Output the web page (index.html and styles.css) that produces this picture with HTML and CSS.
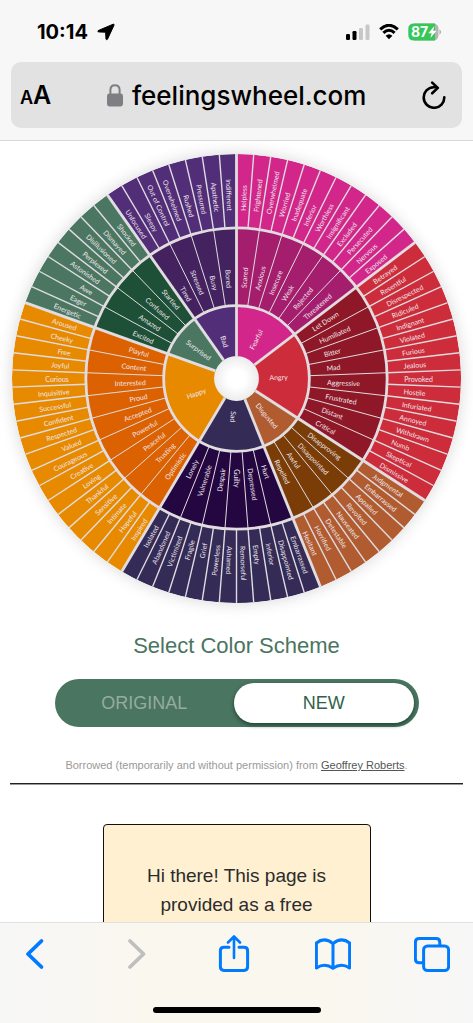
FILE: index.html
```html
<!DOCTYPE html>
<html lang="en">
<head>
    <meta charset="UTF-8">
    <meta name="viewport" content="width=device-width, initial-scale=1.0">
    <title>Feelings Wheel</title>
    <link rel="stylesheet" href="styles.css">
</head>
<body>
    <header class="browser-top">
        <div class="status">
            <span class="time">10:14</span>
            <svg class="location" width="18" height="18" viewBox="0 0 18 18"><path d="M16.2 1.2 L1.2 7.6 Q0.2 8.6 1.6 8.9 L8.6 9.2 L9 16 Q9.5 17.5 10.5 16.2 L17 2.2 Q17.3 0.8 16.2 1.2 Z"/></svg>
            <svg class="signal" width="24" height="16" viewBox="0 0 24 16">
                <rect x="0" y="10" width="4" height="6" rx="1.2"/>
                <rect x="6.5" y="7" width="4" height="9" rx="1.2"/>
                <rect class="off" x="13" y="4" width="4" height="12" rx="1.2"/>
                <rect class="off" x="19.5" y="0.5" width="4" height="15.5" rx="1.2"/>
            </svg>
            <svg class="wifi" width="20" height="16" viewBox="0 0 20 16">
                <path class="arc" d="M1.2 5.4 Q10 -2.8 18.8 5.4"/>
                <path class="arc" d="M4.4 8.9 Q10 3.7 15.6 8.9"/>
                <path d="M6.6 11.7 Q10 8.7 13.4 11.7 L10 15.2 Z"/>
            </svg>
            <svg class="battery" width="34" height="18" viewBox="0 0 34 18">
                <path class="off" d="M6 0.5 H25 Q30.5 0.5 30.5 6 V12 Q30.5 17.5 25 17.5 H6 Z"/>
                <path class="off" d="M31.4 6.3 Q33.2 7.3 33.2 9 Q33.2 10.7 31.4 11.7 Z"/>
                <path class="charge" d="M6 0.5 H27 V17.5 H6 Q0.3 17.5 0.3 12 V6 Q0.3 0.5 6 0.5 Z"/>
                <text x="3" y="14">87</text>
                <path class="bolt" d="M26.4 3 L20.3 10.2 H23.6 L22.4 15 L28.6 7.8 H25.2 Z"/>
            </svg>
        </div>
        <div class="address">
            <button class="text-size" aria-label="Text size"><small>A</small>A</button>
            <div class="url">
                <svg width="16" height="23" viewBox="0 0 16 23"><path class="shackle" d="M3.4 11 V6 Q3.4 1.2 8 1.2 Q12.6 1.2 12.6 6 V11"/><rect x="0" y="9.5" width="16" height="13" rx="2.4"/></svg>
                <span>feelingswheel.com</span>
            </div>
            <button class="reload" aria-label="Reload">
                <svg width="24" height="28" viewBox="0 0 24 28"><path d="M13.2 6.2 H11.6 A10.3 10.3 0 1 0 22.3 16.2"/><path d="M10.2 1.6 L15.8 6.9 L10.2 12.3"/></svg>
            </button>
        </div>
    </header>

    <main>
        <svg id="wheel" class="wheel" viewBox="-225 -225 450 450"></svg>

        <h1>Select Color Scheme</h1>
        <div class="switch">
            <input type="radio" name="scheme" id="original">
            <label for="original">ORIGINAL</label>
            <input type="radio" name="scheme" id="new" checked>
            <label for="new">NEW</label>
        </div>
        <p class="credit">Borrowed (temporarily and without permission) from <a href="#">Geoffrey Roberts</a>.</p>
        <hr>
        <div class="note">Hi there! This page is provided as a free</div>
    </main>

    <footer class="browser-bottom">
        <nav>
            <button aria-label="Back"><svg width="36" height="38" viewBox="0 0 36 38"><path class="chevron" d="M24.5 6 L11 19 L24.5 32"/></svg></button>
            <button class="disabled" aria-label="Forward" disabled><svg width="36" height="38" viewBox="0 0 36 38"><path class="chevron" d="M14 6 L27.5 19 L14 32"/></svg></button>
            <button aria-label="Share"><svg width="36" height="38" viewBox="0 0 36 38"><path d="M13 12.2 H8 Q4.4 12.2 4.4 15.8 V31.8 Q4.4 35.4 8 35.4 H28 Q31.6 35.4 31.6 31.8 V15.8 Q31.6 12.2 28 12.2 H23"/><path class="thin" d="M18 23 V2 M12 7.5 L18 1.5 L24 7.5"/></svg></button>
            <button aria-label="Bookmarks"><svg width="36" height="38" viewBox="0 0 36 38"><path d="M18 8.6 Q9.5 1.5 1.4 8 V33 Q10 27.5 18 33.4 Q26 27.5 34.6 33 V8 Q26.5 1.5 18 8.6 V33"/></svg></button>
            <button aria-label="Tabs"><svg width="36" height="38" viewBox="0 0 36 38"><rect x="9.6" y="11" width="25" height="24.6" rx="4"/><path d="M9 27.8 H5.2 Q1.4 27.8 1.4 24 V7.4 Q1.4 3.6 5.2 3.6 H22 Q25.8 3.6 25.8 7.4 V10.6"/></svg></button>
        </nav>
        <div class="home"></div>
    </footer>

    <script src="wheel.js"></script>
</body>
</html>
```

FILE: styles.css
```css
body {
    margin: 0;
    height: 100vh;
    display: flex;
    flex-direction: column;
    overflow: hidden;
    background-color: #fff;
    font-family: "Liberation Sans", Arial, sans-serif;
}
button {
    border: none;
    padding: 0;
    background: none;
    color: inherit;
    font: inherit;
    cursor: pointer;
}
svg {
    display: block;
    flex: none;
}

/* Top bar */
.browser-top {
    padding: 20px 11px 12px;
    background-color: #f7f7f7;
    border-bottom: 1px solid #d8d8d8;
    font-family: Inter, sans-serif;
}
.status {
    display: flex;
    align-items: center;
    height: 24px;
    padding: 0 20px 0 26px;
    margin-bottom: 18px;
}
.time {
    font-size: 20px;
    font-weight: 700;
}
.location {
    margin-left: 9px;
    stroke: #000;
}
.signal {
    margin-left: auto;
}
.wifi {
    margin: 0 9px;
}
.wifi .arc {
    fill: none;
    stroke: #000;
    stroke-width: 3;
}
.signal .off {
    fill: #c8c8c8;
}
.battery .off {
    fill: #b4b4b4;
}
.battery .charge {
    fill: #34c759;
}
.battery text {
    font-size: 14px;
    font-weight: 700;
    fill: #fff;
}
.battery .bolt {
    fill: #fff;
}
.address {
    display: flex;
    align-items: center;
    justify-content: space-between;
    height: 66px;
    padding: 0 16px 0 9px;
    border-radius: 10px;
    background-color: #e2e2e2;
}
.text-size {
    font-size: 25px;
    font-weight: 600;
}
.text-size small {
    font-size: 18px;
}
.url {
    display: flex;
    align-items: center;
    gap: 9px;
    font-size: 26px;
    font-weight: 500;
}
.url svg {
    fill: #7f7f83;
}
.url .shackle {
    fill: none;
    stroke: #7f7f83;
    stroke-width: 2;
}
.reload svg {
    fill: none;
    stroke: #000;
    stroke-width: 2.6;
    stroke-linecap: round;
    stroke-linejoin: round;
}

/* Page */
main {
    flex: 1;
    min-height: 0;
    overflow: hidden;
    padding: 13px 10px 0;
    text-align: center;
}
.wheel {
    width: calc(100% - 4px);
    margin: 0 auto;
    border-radius: 50%;
    box-shadow: 0 0 16px rgba(0, 0, 0, 0.16);
}
.wheel text {
    font-family: Lato, sans-serif;
    font-size: 7px;
    fill: #efe6ea;
    dominant-baseline: central;
}
.wheel .line {
    fill: none;
    stroke: #e0dcdf;
    stroke-width: 1.4;
}
.wheel .line.fine {
    stroke-width: 1;
}
.wheel .line.thick {
    stroke-width: 2.8;
}
h1 {
    margin: 30px 0 20px;
    font-size: 22px;
    line-height: 26px;
    font-weight: normal;
    color: #4a7560;
}
.switch {
    box-sizing: border-box;
    display: flex;
    width: 364px;
    max-width: 100%;
    height: 48px;
    margin: 0 auto;
    padding: 4px 5px 4px 0;
    border-radius: 24px;
    background-color: #4a7560;
}
.switch input {
    appearance: none;
    width: 0;
    margin: 0;
}
.switch label {
    flex: 1;
    border-radius: 20px;
    font-size: 18px;
    line-height: 40px;
    color: #95ac9f;
    cursor: pointer;
}
.switch input:checked + label {
    background-color: #fff;
    color: #335f4a;
    box-shadow: 0 2px 4px #1d4431;
}
.credit {
    margin: 31px 0 11px;
    font-size: 11px;
    line-height: 14px;
    color: #999;
}
.credit a {
    color: #555;
}
hr {
    margin: 0;
    border: none;
    border-top: 1px solid #222;
    border-bottom: 1px solid #999;
}
.note {
    box-sizing: border-box;
    width: 268px;
    min-height: 180px;
    margin: 39px auto 0;
    padding: 36px 30px;
    border: 1px solid #111;
    border-radius: 4px;
    background-color: #fff0d2;
    font-size: 19px;
    line-height: 29px;
    color: #2b2b2b;
}

/* Bottom bar */
.browser-bottom {
    padding: 12px 0 10px;
    border-top: 1px solid #e0e0e0;
    background: linear-gradient(to right, #f7f7f7, #faf7ef 30%, #faf7ef 70%, #f7f7f7);
}
nav {
    display: flex;
    justify-content: space-between;
    padding: 0 23px 0 17px;
    margin-bottom: 34px;
}
nav svg {
    fill: none;
    stroke: #007aff;
    stroke-width: 3;
    stroke-linecap: round;
    stroke-linejoin: round;
}
nav .chevron {
    stroke-width: 3.8;
}
nav .thin {
    stroke-width: 2.6;
}
nav .disabled svg {
    stroke: #bfbfbf;
}
.home {
    width: 168px;
    height: 6px;
    margin: 0 auto;
    border-radius: 3px;
    background-color: #000;
}
```

FILE: wheel.js
```js
// Feelings in clockwise order, starting at the top
const feelings = [
    {
        name: 'Fearful', color: '#d2268a', dark: '#a51e6e',
        middle: ['Scared', 'Anxious', 'Insecure', 'Weak', 'Rejected', 'Threatened'],
        outer: ['Helpless', 'Frightened', 'Overwhelmed', 'Worried', 'Inadequate', 'Inferior', 'Worthless', 'Insignificant', 'Excluded', 'Persecuted', 'Nervous', 'Exposed']
    },
    {
        name: 'Angry', color: '#cd2c3b', dark: '#8f1828',
        middle: ['Let Down', 'Humiliated', 'Bitter', 'Mad', 'Aggressive', 'Frustrated', 'Distant', 'Critical'],
        outer: ['Betrayed', 'Resentful', 'Disrespected', 'Ridiculed', 'Indignant', 'Violated', 'Furious', 'Jealous', 'Provoked', 'Hostile', 'Infuriated', 'Annoyed', 'Withdrawn', 'Numb', 'Skeptical', 'Dismissive']
    },
    {
        name: 'Disgusted', color: '#b05c30', dark: '#7a3d08',
        middle: ['Disapproving', 'Disappointed', 'Awful', 'Repelled'],
        outer: ['Judgmental', 'Embarrassed', 'Appalled', 'Revolted', 'Nauseated', 'Detestable', 'Horrified', 'Hesitant']
    },
    {
        name: 'Sad', color: '#342b57', dark: '#240741',
        middle: ['Hurt', 'Depressed', 'Guilty', 'Despair', 'Vulnerable', 'Lonely'],
        outer: ['Embarrassed', 'Disappointed', 'Inferior', 'Empty', 'Remorseful', 'Ashamed', 'Powerless', 'Grief', 'Fragile', 'Victimized', 'Abandoned', 'Isolated']
    },
    {
        name: 'Happy', color: '#e88a00', dark: '#dc6100',
        middle: ['Optimistic', 'Trusting', 'Peaceful', 'Powerful', 'Accepted', 'Proud', 'Interested', 'Content', 'Playful'],
        outer: ['Inspired', 'Hopeful', 'Intimate', 'Sensitive', 'Thankful', 'Loving', 'Creative', 'Courageous', 'Valued', 'Respected', 'Confident', 'Successful', 'Inquisitive', 'Curious', 'Joyful', 'Free', 'Cheeky', 'Aroused']
    },
    {
        name: 'Surprised', color: '#4b7762', dark: '#1e5038',
        middle: ['Excited', 'Amazed', 'Confused', 'Startled'],
        outer: ['Energetic', 'Eager', 'Awe', 'Astonished', 'Perplexed', 'Disillusioned', 'Dismayed', 'Shocked']
    },
    {
        name: 'Bad', color: '#522d78', dark: '#43225f',
        middle: ['Tired', 'Stressed', 'Busy', 'Bored'],
        outer: ['Unfocused', 'Sleepy', 'Out of Control', 'Overwhelmed', 'Rushed', 'Pressured', 'Apathetic', 'Indifferent']
    }
];

const HOLE = 22.5;
const INNER = 73;
const MIDDLE = 151;
const OUTER = 225;

const total = feelings.reduce((sum, f) => sum + f.outer.length, 0);
const step = 360 / total;

function point(radius, angle) {
    const a = (angle - 90) * Math.PI / 180;
    return `${(radius * Math.cos(a)).toFixed(2)} ${(radius * Math.sin(a)).toFixed(2)}`;
}

function wedge(radius, from, to, color) {
    return `<path d="M0 0 L${point(radius, from)} A${radius} ${radius} 0 0 1 ${point(radius, to)} Z" fill="${color}"/>`;
}

function line(from, to, angle, kind) {
    return `<path class="line ${kind}" d="M${point(from, angle)} L${point(to, angle)}"/>`;
}

// Labels start near the inside of their ring, those on the left are turned round
function label(text, radius, angle) {
    if (angle > 185) {
        return `<text transform="rotate(${angle + 90})" x="${-radius}" text-anchor="end">${text}</text>`;
    }
    return `<text transform="rotate(${angle - 90})" x="${radius}">${text}</text>`;
}

let shapes = '';
let lines = '';
let labels = '';
let start = 0;

feelings.forEach(f => {
    const end = start + f.outer.length * step;
    shapes += wedge(OUTER, start, end, f.color);
    shapes += wedge(MIDDLE, start, end, f.dark);
    shapes += wedge(INNER, start, end, f.color);

    f.outer.forEach((name, i) => {
        lines += line(MIDDLE, OUTER, start + i * step, '');
        labels += label(name, 168, start + (i + 0.5) * step);
    });
    f.middle.forEach((name, i) => {
        lines += line(INNER, MIDDLE, start + i * step * 2, 'fine');
        labels += label(name, 91, start + (i + 0.5) * step * 2);
    });
    lines += line(HOLE, OUTER, start, 'thick');
    labels += label(f.name, 33, (start + end) / 2);
    start = end;
});

document.getElementById('wheel').innerHTML = `
    <defs>
        <radialGradient id="hole">
            <stop offset="0.4" stop-color="#fff"/>
            <stop offset="1" stop-color="#ececec"/>
        </radialGradient>
    </defs>
    ${shapes}${lines}
    <circle class="line thick" r="${INNER}"/>
    <circle class="line thick" r="${MIDDLE}"/>
    <circle r="${HOLE}" fill="url(#hole)"/>
    ${labels}`;
```
